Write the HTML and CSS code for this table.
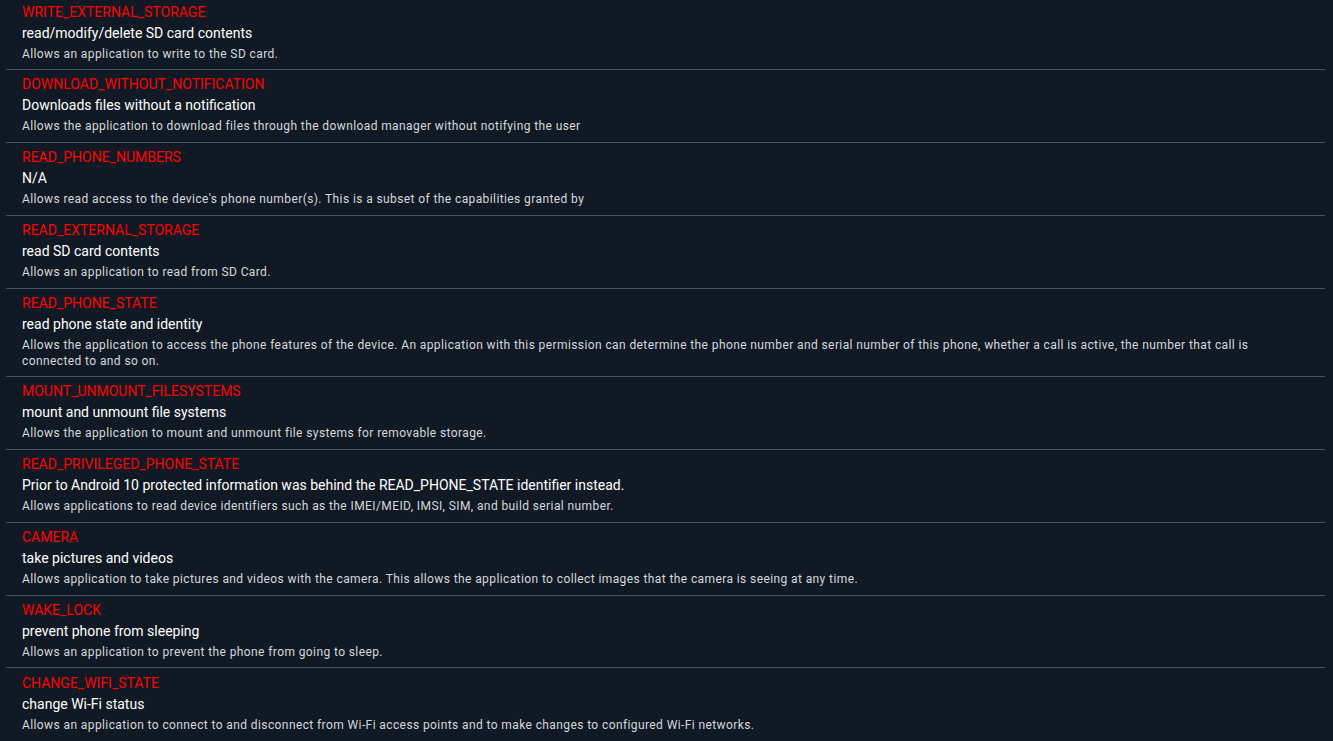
FILE: index.html
```html
<!DOCTYPE html>
<html lang="en">
<head>
<meta charset="utf-8">
<title>Permissions</title>
<link rel="stylesheet" href="styles.css">
</head>
<body>
<ul class="perm-list">
  <li class="perm">
    <div class="perm-name">WRITE_EXTERNAL_STORAGE</div>
    <div class="perm-label">read/modify/delete SD card contents</div>
    <div class="perm-desc">Allows an application to write to the SD card.</div>
  </li>
  <li class="perm">
    <div class="perm-name">DOWNLOAD_WITHOUT_NOTIFICATION</div>
    <div class="perm-label">Downloads files without a notification</div>
    <div class="perm-desc">Allows the application to download files through the download manager without notifying the user</div>
  </li>
  <li class="perm">
    <div class="perm-name">READ_PHONE_NUMBERS</div>
    <div class="perm-label">N/A</div>
    <div class="perm-desc">Allows read access to the device's phone number(s). This is a subset of the capabilities granted by</div>
  </li>
  <li class="perm">
    <div class="perm-name">READ_EXTERNAL_STORAGE</div>
    <div class="perm-label">read SD card contents</div>
    <div class="perm-desc">Allows an application to read from SD Card.</div>
  </li>
  <li class="perm">
    <div class="perm-name">READ_PHONE_STATE</div>
    <div class="perm-label">read phone state and identity</div>
    <div class="perm-desc">Allows the application to access the phone features of the device. An application with this permission can determine the phone number and serial number of this phone, whether a call is active, the number that call is connected to and so on.</div>
  </li>
  <li class="perm">
    <div class="perm-name">MOUNT_UNMOUNT_FILESYSTEMS</div>
    <div class="perm-label">mount and unmount file systems</div>
    <div class="perm-desc">Allows the application to mount and unmount file systems for removable storage.</div>
  </li>
  <li class="perm">
    <div class="perm-name">READ_PRIVILEGED_PHONE_STATE</div>
    <div class="perm-label">Prior to Android 10 protected information was behind the READ_PHONE_STATE identifier instead.</div>
    <div class="perm-desc">Allows applications to read device identifiers such as the IMEI/MEID, IMSI, SIM, and build serial number.</div>
  </li>
  <li class="perm">
    <div class="perm-name">CAMERA</div>
    <div class="perm-label">take pictures and videos</div>
    <div class="perm-desc">Allows application to take pictures and videos with the camera. This allows the application to collect images that the camera is seeing at any time.</div>
  </li>
  <li class="perm">
    <div class="perm-name">WAKE_LOCK</div>
    <div class="perm-label">prevent phone from sleeping</div>
    <div class="perm-desc">Allows an application to prevent the phone from going to sleep.</div>
  </li>
  <li class="perm">
    <div class="perm-name">CHANGE_WIFI_STATE</div>
    <div class="perm-label">change Wi-Fi status</div>
    <div class="perm-desc">Allows an application to connect to and disconnect from Wi-Fi access points and to make changes to configured Wi-Fi networks.</div>
  </li>
</ul>
</body>
</html>
```

FILE: styles.css
```css
html, body {
  margin: 0;
  padding: 0;
  background: #111a24;
  height: 100%;
  overflow: hidden;
}

body {
  font-family: Roboto, "Liberation Sans", sans-serif;
  color: #ffffff;
}

.perm-list {
  list-style: none;
  margin: -3px 8px 0 6px;
  padding: 0;
}

.perm {
  padding: 4.5px 16px 6.875px 16px;
  border-bottom: 1px solid #4b5158;
}

.perm:last-child {
  border-bottom: none;
}

.perm-name {
  color: #ff0000;
  font-size: 14px;
  line-height: 21px;
}

.perm-label {
  color: #ffffff;
  font-size: 14px;
  line-height: 21px;
}

.perm-desc {
  margin-top: 3px;
  color: #d4d8de;
  font-size: 12px;
  line-height: 15.5px;
  letter-spacing: 0.4px;
}
```
